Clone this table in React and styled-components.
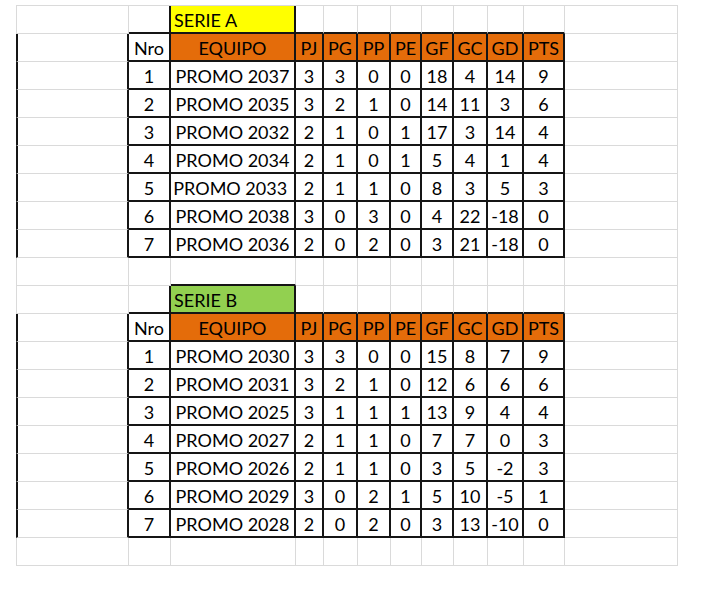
import React from 'react';
import styled, { createGlobalStyle } from 'styled-components';

const GRAY = '#dadada';
const BLACK = '#151515';

const Global = createGlobalStyle`
  html, body { margin: 0; padding: 0; background: #ffffff; }
  body { font-family: Lato, "Liberation Sans", sans-serif; }
`;

const COLS = [113, 42, 125, 28, 34, 33, 31, 32, 34, 36, 41, 113];

const Sheet = styled.div`
  display: grid;
  grid-template-columns: ${COLS.map((c) => c + 'px').join(' ')};
  grid-auto-rows: 28px;
  margin: 5px 0 0 16px;
  width: max-content;
  border-top: 1px solid ${GRAY};
`;

const Row = styled.div`
  display: contents;
`;

const line = (black) => (black ? `2px solid ${BLACK}` : `1px solid ${GRAY}`);

const Cell = styled.div`
  box-sizing: border-box;
  display: flex;
  align-items: center;
  justify-content: ${(p) => (p.$align === 'left' ? 'flex-start' : 'center')};
  padding: ${(p) => (p.$align === 'left' ? '2px 0 0 3px' : '2px 0 0 0')};
  background: ${(p) => p.$bg || '#ffffff'};
  border-right: ${(p) => line(p.$right)};
  border-bottom: ${(p) => line(p.$bottom)};
  border-left: ${(p) => (p.$left === undefined ? 'none' : line(p.$left))};
  font-size: 18px;
  color: #000;
  white-space: pre;
  overflow: hidden;
`;

const YELLOW = '#ffff00';
const GREEN = '#92d050';
const ORANGE = '#e46c0a';

const HEAD = ['Nro', 'EQUIPO', 'PJ', 'PG', 'PP', 'PE', 'GF', 'GC', 'GD', 'PTS'];

const SERIES = [
  {
    name: 'SERIE A',
    color: YELLOW,
    rows: [
      ['1', 'PROMO 2037', 3, 3, 0, 0, 18, 4, 14, 9],
      ['2', 'PROMO 2035', 3, 2, 1, 0, 14, 11, 3, 6],
      ['3', 'PROMO 2032', 2, 1, 0, 1, 17, 3, 14, 4],
      ['4', 'PROMO 2034', 2, 1, 0, 1, 5, 4, 1, 4],
      ['5', 'PROMO 2033 ', 2, 1, 1, 0, 8, 3, 5, 3],
      ['6', 'PROMO 2038', 3, 0, 3, 0, 4, 22, -18, 0],
      ['7', 'PROMO 2036', 2, 0, 2, 0, 3, 21, -18, 0],
    ],
  },
  {
    name: 'SERIE B',
    color: GREEN,
    rows: [
      ['1', 'PROMO 2030', 3, 3, 0, 0, 15, 8, 7, 9],
      ['2', 'PROMO 2031', 3, 2, 1, 0, 12, 6, 6, 6],
      ['3', 'PROMO 2025', 3, 1, 1, 1, 13, 9, 4, 4],
      ['4', 'PROMO 2027', 2, 1, 1, 0, 7, 7, 0, 3],
      ['5', 'PROMO 2026', 2, 1, 1, 0, 3, 5, -2, 3],
      ['6', 'PROMO 2029', 3, 0, 2, 1, 5, 10, -5, 1],
      ['7', 'PROMO 2028', 2, 0, 2, 0, 3, 13, -10, 0],
    ],
  },
];

const blankCell = () => ({ text: '', boxed: false });

function buildMatrix() {
  const m = [];
  SERIES.forEach((s) => {
    const title = COLS.map(blankCell);
    title[2] = { text: s.name, boxed: true, bg: s.color, align: 'left' };
    m.push({ cells: title, table: false });
    const head = COLS.map(blankCell);
    HEAD.forEach((h, i) => {
      head[i + 1] = { text: h, boxed: true, bg: i === 0 ? undefined : ORANGE };
    });
    m.push({ cells: head, table: true });
    s.rows.forEach((r) => {
      const row = COLS.map(blankCell);
      r.forEach((v, i) => {
        row[i + 1] = { text: String(v), boxed: true };
      });
      m.push({ cells: row, table: true });
    });
    m.push({ cells: COLS.map(blankCell), table: false });
  });
  return m;
}

const MATRIX = buildMatrix();

export default function App() {
  return (
    <>
      <Global />
      <Sheet>
        {MATRIX.map((row, ri) => (
          <Row key={ri}>
            {row.cells.map((c, ci) => {
              const right = c.boxed || (row.cells[ci + 1] && row.cells[ci + 1].boxed);
              const below = MATRIX[ri + 1];
              const bottom = c.boxed || (below && below.cells[ci].boxed);
              return (
                <Cell
                  key={ci}
                  $bg={c.bg}
                  $align={c.align}
                  $right={!!right}
                  $bottom={!!bottom}
                  $left={ci === 0 ? row.table : undefined}
                >
                  {c.text}
                </Cell>
              );
            })}
          </Row>
        ))}
      </Sheet>
    </>
  );
}
